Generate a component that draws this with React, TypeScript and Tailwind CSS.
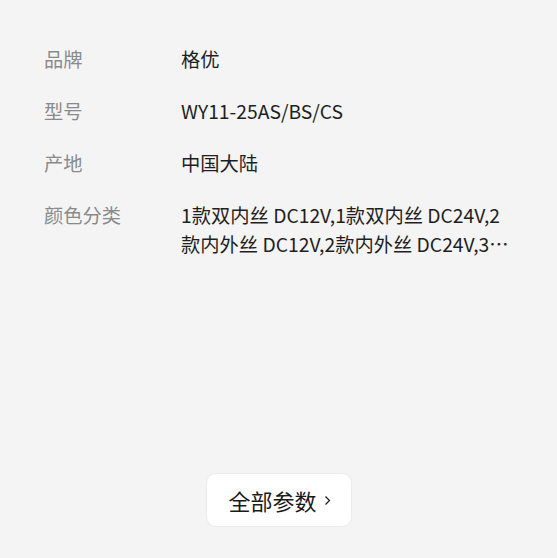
const rows = [
  { label: "品牌", value: "格优" },
  { label: "型号", value: "WY11-25AS/BS/CS" },
  { label: "产地", value: "中国大陆" },
  {
    label: "颜色分类",
    value:
      "1款双内丝 DC12V,1款双内丝 DC24V,2款内外丝 DC12V,2款内外丝 DC24V,3款外丝 DC12V,3款外丝 DC24V",
  },
];

export default function App() {
  return (
    <div
      className="flex h-[558px] w-[557px] flex-col bg-[#f4f4f4]"
      style={{ fontFamily: '"Noto Sans CJK SC", "Noto Sans", sans-serif' }}
    >
      <div className="flex flex-col gap-[23px] pl-[44px] pt-[45px]">
        {rows.map((r) => (
          <div key={r.label} className="flex text-[19.3px] leading-[29px]">
            <div className="w-[137px] shrink-0 text-[#8a8a8a]">{r.label}</div>
            <div className="line-clamp-2 w-[330px] text-[#1f1f1f]">{r.value}</div>
          </div>
        ))}
      </div>
      <div className="mt-auto mb-[31px] flex justify-center">
        <button className="flex h-[54px] w-[146px] items-center justify-center gap-[7px] rounded-[10px] border border-[#ebebeb] bg-white pl-[2px] text-[22px] text-[#1a1a1a]">
          全部参数
          <svg width="7" height="11" viewBox="0 0 7 11" fill="none">
            <path d="M1.5 1.5l4 4-4 4" stroke="#1a1a1a" strokeWidth="1.2" />
          </svg>
        </button>
      </div>
    </div>
  );
}
